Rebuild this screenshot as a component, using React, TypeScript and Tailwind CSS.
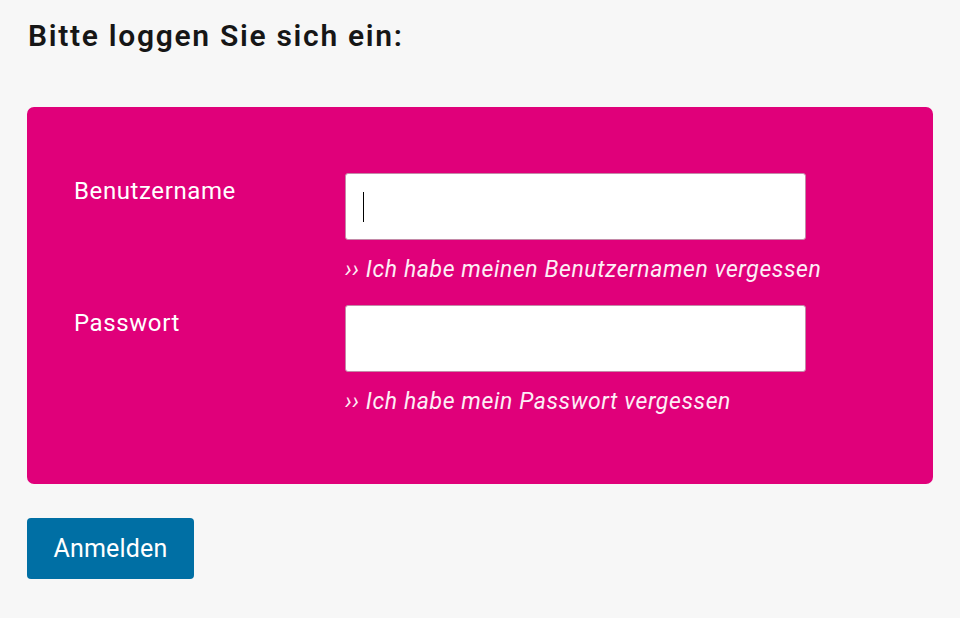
import { useState } from "react";

const font = { fontFamily: "Roboto, 'Liberation Sans', sans-serif" };

const LoginField = ({
  label,
  type,
  hint,
  focused,
}: {
  label: string;
  type: string;
  hint: string;
  focused?: boolean;
}) => {
  const [value, setValue] = useState("");
  return (
    <div className="grid grid-cols-[271px_461px]">
      <label className="text-[24px] leading-[36px] tracking-[0.6px] text-white">{label}</label>
      <div className="flex flex-col">
        <div className="relative">
          <input
            type={type}
            value={value}
            onChange={(e) => setValue(e.target.value)}
            className="h-[67px] w-[461px] rounded-[3px] border border-[#c48aa8] bg-white px-[17px] text-[22px] text-black caret-black outline-none"
          />
          {/* Textcursor im aktiven Feld */}
          {focused && value === "" && (
            <span className="pointer-events-none absolute left-[18px] top-[19px] h-[30px] w-px bg-black" />
          )}
        </div>
        <a href="#" className="mt-[13px] whitespace-nowrap text-[23px] italic leading-[33px] tracking-[0.6px] text-[#fdeef6]">
          ›› {hint}
        </a>
      </div>
    </div>
  );
};

export default function App() {
  return (
    <div className="min-h-screen bg-[#f7f7f7] px-[27px] pt-[17px]" style={font}>
      <h1 className="pl-px text-[30px] font-semibold leading-[37px] tracking-[1.7px] text-[#161616]">
        Bitte loggen Sie sich ein:
      </h1>

      {/* Anmeldeformular */}
      <div className="mt-[53px] flex w-[906px] flex-col gap-[19px] rounded-[7px] bg-[#e0007a] pb-[66px] pl-[47px] pt-[66px]">
        <LoginField label="Benutzername" type="text" hint="Ich habe meinen Benutzernamen vergessen" focused />
        <LoginField label="Passwort" type="password" hint="Ich habe mein Passwort vergessen" />
      </div>

      <button className="mt-[34px] h-[61px] w-[167px] rounded-[4px] bg-[#006fa4] text-[25px] tracking-[0.2px] text-white">
        Anmelden
      </button>
    </div>
  );
}
